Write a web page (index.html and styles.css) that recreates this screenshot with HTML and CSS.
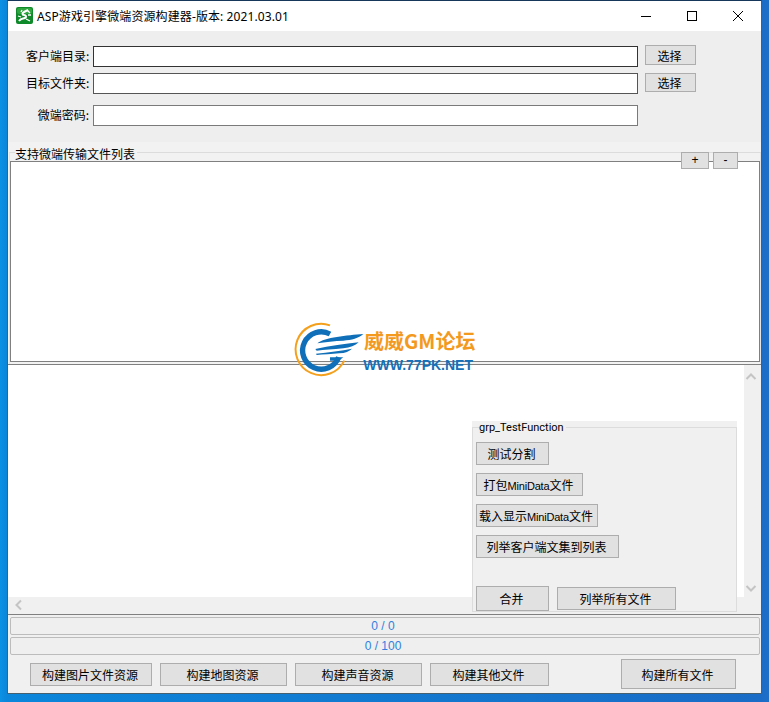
FILE: index.html
```html
<!DOCTYPE html>
<html lang="zh">
<head>
<meta charset="utf-8">
<title>ASP游戏引擎微端资源构建器</title>
<link rel="stylesheet" href="styles.css">
</head>
<body>
<div class="window">
  <header class="titlebar">
    <svg class="app-icon" width="17" height="17" viewBox="0 0 17 17">
      <rect width="17" height="17" rx="2" fill="#0f8a2a"/>
      <rect x="1" y="1" width="15" height="6" rx="2" fill="#2fa63f"/>
      <path d="M3 14C5 11 7 12 9 11 11 10 10 8 8 8 6 8 6 6 8 5L12 3" fill="none" stroke="#fff" stroke-width="2"/>
      <path d="M2 9 5 10M11 3 14 6M10 12 14 14M5 5 6 3M12 8 15 8" stroke="#fff" stroke-width="1.300" fill="none"/>
    </svg>
    <span class="title-text">ASP游戏引擎微端资源构建器-版本: 2021.03.01</span>
    <div class="controls">
      <svg class="ctl" width="46" height="30" viewBox="0 0 46 30"><path d="M18 15.500H28" stroke="#000" fill="none"/></svg>
      <svg class="ctl" width="46" height="30" viewBox="0 0 46 30"><rect x="18.500" y="10.500" width="9" height="9" stroke="#000" fill="none"/></svg>
      <svg class="ctl" width="46" height="30" viewBox="0 0 46 30"><path d="M18 10 28 20M28 10 18 20" stroke="#000" fill="none"/></svg>
    </div>
  </header>

  <section class="form">
    <label class="field-label">客户端目录:</label>
    <div class="input input-a"></div>
    <button class="btn btn-pick btn-pick-a">选择</button>
    <label class="field-label">目标文件夹:</label>
    <div class="input input-b"></div>
    <button class="btn btn-pick">选择</button>
    <label class="field-label row-3">微端密码:</label>
    <div class="input input-c row-3"></div>
  </section>

  <section class="list-group">
    <div class="list-frame">
      <span class="legend">支持微端传输文件列表</span>
      <div class="mini-btns">
        <button class="btn btn-plus">+</button>
        <button class="btn btn-minus">-</button>
      </div>
      <div class="list-box"></div>
    </div>
  </section>

  <section class="lower">
    <div class="canvas"></div>
    <div class="vbar">
      <svg width="12" height="10" viewBox="0 0 12 10"><path d="M1.500 8 6 3.500 10.500 8" fill="none" stroke="#c4c4c4" stroke-width="2"/></svg>
      <svg width="12" height="10" viewBox="0 0 12 10"><path d="M1.500 2 6 6.500 10.500 2" fill="none" stroke="#c4c4c4" stroke-width="2"/></svg>
    </div>
    <div class="hbar">
      <svg width="10" height="12" viewBox="0 0 10 12"><path d="M8 1.500 3.500 6 8 10.500" fill="none" stroke="#c4c4c4" stroke-width="2"/></svg>
    </div>
    <div class="test-group">
      <span class="test-legend">grp_TestFunction</span>
      <div class="test-stack">
        <button class="btn t1">测试分割</button>
        <button class="btn t2">打包<span class="latin">MiniData</span>文件</button>
        <button class="btn t3">载入显示<span class="latin">MiniData</span>文件</button>
        <button class="btn t4">列举客户端文集到列表</button>
      </div>
      <div class="test-foot">
        <button class="btn t5">合并</button>
        <button class="btn t6">列举所有文件</button>
      </div>
    </div>
  </section>

  <section class="progress-stack">
    <div class="progress">0 / 0</div>
    <div class="progress">0 / 100</div>
  </section>

  <footer class="actions">
    <button class="btn b1">构建图片文件资源</button>
    <button class="btn b2">构建地图资源</button>
    <button class="btn b2">构建声音资源</button>
    <button class="btn b4">构建其他文件</button>
    <button class="btn b5">构建所有文件</button>
  </footer>
</div>

<div class="watermark">
  <svg width="210" height="90" viewBox="0 0 630 270">
    <path d="M150 46A77 77 0 1 0 193 152" fill="none" stroke="#f5a01c" stroke-width="6"/>
    <path d="M150 72A56 56 0 1 0 176 142" fill="none" stroke="#0f6fb8" stroke-width="16"/>
    <path d="M150 142H190L176 152H150Z" fill="#0f6fb8"/>
    <path d="M112 100C135 82 200 76 250 72 236 85 215 90 190 92 165 93 135 96 112 100Z" fill="#0f6fb8"/>
    <path d="M106 117C150 108 195 102 236 97 226 107 210 113 190 115 160 118 132 120 110 122Z" fill="#0f6fb8"/>
    <path d="M108 131C145 127 185 122 216 116 208 124 196 129 178 130 155 132 130 134 110 135Z" fill="#0f6fb8"/>
    <text class="wm-cn" x="252" y="118">威威GM论坛</text>
    <text class="wm-en" x="250" y="180">WWW.77PK.NET</text>
  </svg>
</div>
</body>
</html>
```

FILE: styles.css
```css
* { box-sizing: border-box; }

html, body {
  margin: 0;
  height: 702px;
  overflow: hidden;
}

body {
  position: relative;
  padding-left: 7px;
  background: linear-gradient(90deg, #0b92e4 0, #0a86da 7px, #1a6cc6 761px, #1d6fc8 769px);
  font-family: "Noto Sans CJK SC", "Liberation Sans", sans-serif;
  font-size: 12px;
  color: #000;
}

.window {
  width: 755px;
  height: 694px;
  border: 1px solid #47606f;
  border-top-color: #16365a;
  background: #f0f0f0;
  display: flex;
  flex-direction: column;
}

.titlebar {
  height: 30px;
  flex: none;
  background: #fff;
  display: flex;
  align-items: center;
  padding-left: 8px;
}

.app-icon { flex: none; margin-top: -1px; }

.title-text {
  margin-left: 4px;
  font-size: 12px;
  letter-spacing: 0.1px;
  font-family: "Noto Sans", "Noto Sans CJK SC", sans-serif;
  white-space: nowrap;
}

.controls {
  margin-left: auto;
  display: flex;
}

.ctl { display: block; }

.form {
  flex: none;
  height: 111px;
  background: #eeeeee;
  padding: 15px 0 0 18px;
  display: grid;
  grid-template-columns: 64px 545px 51px;
  grid-template-rows: 21px 21px 21px;
  column-gap: 3px;
  row-gap: 6px;
  align-items: start;
}

.field-label {
  grid-column: 1;
  text-align: right;
  line-height: 20px;
  white-space: nowrap;
  padding-right: 1px;
}

.input {
  grid-column: 2;
  height: 21px;
  background: #fff;
  border: 1px solid #7a7a7a;
}

.input-a { border-color: #333; }
.input-b { border-color: #555; }
.input-c { border-color: #7a7a7a; }

.row-3 { margin-top: 5px; }

.btn {
  margin: 0;
  padding: 0 2px 0 0;
  background: #e1e1e1;
  border: 1px solid #adadad;
  border-radius: 0;
  font: 12px "Noto Sans CJK SC", "Liberation Sans", sans-serif;
  color: #000;
  white-space: nowrap;
  display: block;
}

.btn-pick {
  grid-column: 3;
  margin-left: 4px;
  width: 51px;
  height: 19px;
}

.btn-pick-a { height: 20px; margin-top: -1px; }

.list-group {
  flex: none;
  height: 222px;
  padding: 10px 0 0 1px;
  background: #f2f2f2;
}

.list-frame {
  position: relative;
  height: 212px;
  border-top: 1px solid #dcdcdc;
  border-left: 1px solid #e4e4e4;
  border-right: 1px solid #e4e4e4;
  padding-top: 8px;
}

.legend {
  position: absolute;
  left: 5px;
  top: -7px;
  line-height: 15px;
  padding-right: 2px;
  background: #f2f2f2;
}

.mini-btns {
  position: absolute;
  left: 671px;
  top: -1px;
  display: flex;
  gap: 4px;
}

.btn-plus, .btn-minus {
  height: 17px;
  padding: 0;
  line-height: 15px;
  font-family: "Liberation Sans", sans-serif;
}

.btn-plus { width: 28px; }
.btn-minus { width: 25px; }

.list-box {
  height: 201px;
  background: #fff;
  border: 1px solid #808080;
}

.lower {
  position: relative;
  flex: none;
  height: 251px;
  border-top: 1px solid #808080;
  border-bottom: 1px solid #808080;
  display: grid;
  grid-template-columns: 1fr 17px;
  grid-template-rows: 1fr 17px;
  background: #f0f0f0;
}

.canvas { background: #fff; }

.vbar {
  grid-row: 1 / 3;
  grid-column: 2;
  display: flex;
  flex-direction: column;
  justify-content: space-between;
  align-items: center;
  padding: 6px 4px 20px 0;
  background: #f0f0f0;
}

.vbar svg, .hbar svg { display: block; }

.hbar {
  grid-row: 2;
  grid-column: 1;
  padding: 2px 0 0 5px;
  background: #f0f0f0;
}

.test-group {
  position: absolute;
  left: 464px;
  top: 56px;
  width: 265px;
  height: 191px;
  padding-top: 6px;
  background: #f0f0f0;
}

.test-group::before {
  content: "";
  position: absolute;
  inset: 6px 0 0 0;
  border: 1px solid #dcdcdc;
}

.test-legend {
  position: absolute;
  left: 7px;
  top: 0;
  line-height: 14px;
  font-family: "Roboto", "Liberation Sans", sans-serif;
  font-size: 11px;
  background: #f0f0f0;
  padding-right: 2px;
  z-index: 1;
}

.test-stack {
  position: relative;
  padding: 15px 0 0 4px;
  display: flex;
  flex-direction: column;
  align-items: flex-start;
  gap: 8px;
}

.test-foot {
  position: relative;
  margin-top: 28px;
  padding-left: 4px;
  display: flex;
  align-items: flex-start;
  gap: 8px;
}

.latin { font-family: "Liberation Sans", sans-serif; font-size: 11px; letter-spacing: -0.2px; }

.t1 { width: 73px; height: 23px; }
.t2 { width: 107px; height: 23px; }
.t3 { width: 122px; height: 23px; }
.t4 { width: 143px; height: 23px; }
.t5 { width: 73px; height: 25px; }
.t6 { width: 119px; height: 23px; margin-top: 1px; }

.progress-stack {
  flex: none;
  padding: 2px 1px 0 2px;
  display: flex;
  flex-direction: column;
  gap: 2px;
}

.progress {
  height: 18px;
  border: 1px solid #bcbcbc;
  border-radius: 2px;
  background: #efefef;
  text-align: center;
  line-height: 17px;
  font-family: "Liberation Sans", sans-serif;
  font-size: 12px;
  color: #2f80e0;
  padding-right: 4px;
}

.actions {
  flex: none;
  padding: 4px 0 0 22px;
  display: flex;
  align-items: flex-start;
  gap: 8px;
}

.actions .btn { height: 23px; margin-top: 4px; }
.b1 { width: 122px; }
.b2 { width: 127px; }
.b4 { width: 119px; }
.actions .b5 {
  width: 115px;
  height: 30px;
  margin-top: 0;
  margin-left: 64px;
}

.watermark {
  position: absolute;
  left: 280px;
  top: 310px;
  width: 210px;
  height: 90px;
}

.watermark svg { display: block; }

.wm-cn {
  font-family: "Noto Sans CJK SC", sans-serif;
  font-weight: 700;
  font-size: 60px;
  fill: #f39a1e;
}

.wm-en {
  font-family: "Liberation Sans", sans-serif;
  font-weight: 700;
  font-size: 42px;
  fill: #1470b8;
}
```
